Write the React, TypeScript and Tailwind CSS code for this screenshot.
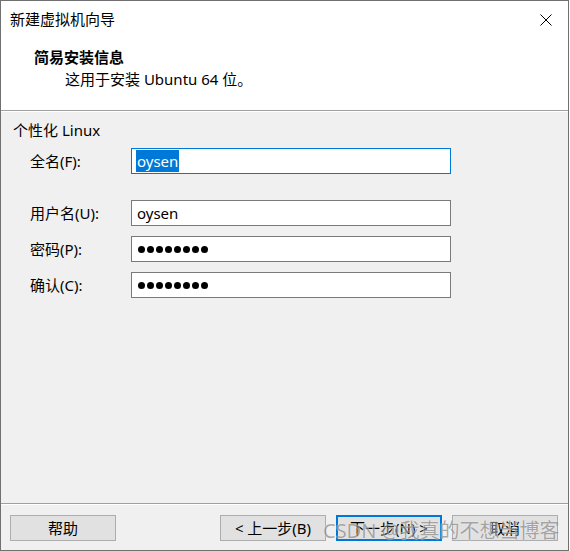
import React from "react";

const font = { fontFamily: '"Noto Sans", "Noto Sans CJK SC", sans-serif' };

function Dots() {
  return (
    <div className="flex items-center gap-[2px]">
      {[0, 1, 2, 3, 4, 5, 6, 7].map((i) => (
        <span key={i} className="block h-[7px] w-[7px] rounded-full bg-black" />
      ))}
    </div>
  );
}

function Row({ label, children, focused, className }: { label: string; children: React.ReactNode; focused?: boolean; className?: string }) {
  return (
    <div className={"flex items-center " + (className ?? "")}>
      <div className="w-[130px] shrink-0 pl-[29px] text-[15px] leading-[20px] text-black">{label}</div>
      <div
        className={
          "flex h-[26px] w-[320px] shrink-0 items-center bg-white pl-[4px] " +
          (focused ? "border border-[#0078d7]" : "border border-[#7a7a7a]")
        }
      >
        {children}
      </div>
    </div>
  );
}

function Btn({ children, primary }: { children: React.ReactNode; primary?: boolean }) {
  return (
    <div
      className={
        "flex h-[26px] w-[106px] items-center justify-center bg-[#e1e1e1] text-[15px] leading-[20px] text-black " +
        (primary ? "border-2 border-[#0078d7]" : "border border-[#adadad]")
      }
    >
      {children}
    </div>
  );
}

export default function App() {
  return (
    <div className="h-[551px] w-[570px] bg-white" style={font}>
      <div className="flex h-[551px] w-[569px] flex-col border border-[#707070] bg-[#f0f0f0]">
        <div className="h-[109px] bg-white">
          <div className="flex h-[36px] items-center justify-between pl-[9px] pr-[16px]">
            <span className="text-[15px] leading-[20px] text-black">新建虚拟机向导</span>
            <svg width="12" height="12" viewBox="0 0 12 12" className="mt-[1px]">
              <path d="M0.5 0.5 L11.5 11.5 M11.5 0.5 L0.5 11.5" stroke="#000" strokeWidth="1" />
            </svg>
          </div>
          <div className="mt-[10px] pl-[33px] text-[15px] font-bold leading-[20px] text-black">简易安装信息</div>
          <div className="mt-[2px] pl-[64px] text-[15px] leading-[20px] text-black">这用于安装 Ubuntu 64 位。</div>
        </div>
        <div className="h-[2px] border-t border-[#a0a0a0] bg-white" />
        <div className="flex flex-1 flex-col">
          <div className="mt-[8px] pl-[12px] text-[15px] leading-[20px] text-black">个性化 Linux</div>
          <Row label="全名(F):" focused className="mt-[8px]">
            <span className="bg-[#0078d7] px-[1px] text-[15px] leading-[22px] text-white">oysen</span>
          </Row>
          <Row label="用户名(U):" className="mt-[26px]">
            <span className="pl-[1px] text-[15px] leading-[20px] text-black">oysen</span>
          </Row>
          <Row label="密码(P):" className="mt-[10px]">
            <div className="pl-[2px]">
              <Dots />
            </div>
          </Row>
          <Row label="确认(C):" className="mt-[10px]">
            <div className="pl-[2px]">
              <Dots />
            </div>
          </Row>
          <div className="flex-1" />
          <div className="h-[2px] border-t border-[#a0a0a0] bg-white" />
          <div className="relative flex h-[45px] items-start pl-[9px] pr-[10px] pt-[10px]">
            <Btn>帮助</Btn>
            <div className="flex-1" />
            <div className="flex gap-[10px]">
              <Btn>&lt; 上一步(B)</Btn>
              <Btn primary>下一步(N) &gt;</Btn>
              <Btn>取消</Btn>
            </div>
            <div
              className="pointer-events-none absolute left-[322px] top-[13px] whitespace-nowrap text-[20px] leading-[26px] text-[#8a8a8a] opacity-70"
              style={{ textShadow: "0 0 1px #fff, 0 0 1px #fff" }}
            >
              CSDN @我真的不想当博客
            </div>
          </div>
        </div>
      </div>
    </div>
  );
}
